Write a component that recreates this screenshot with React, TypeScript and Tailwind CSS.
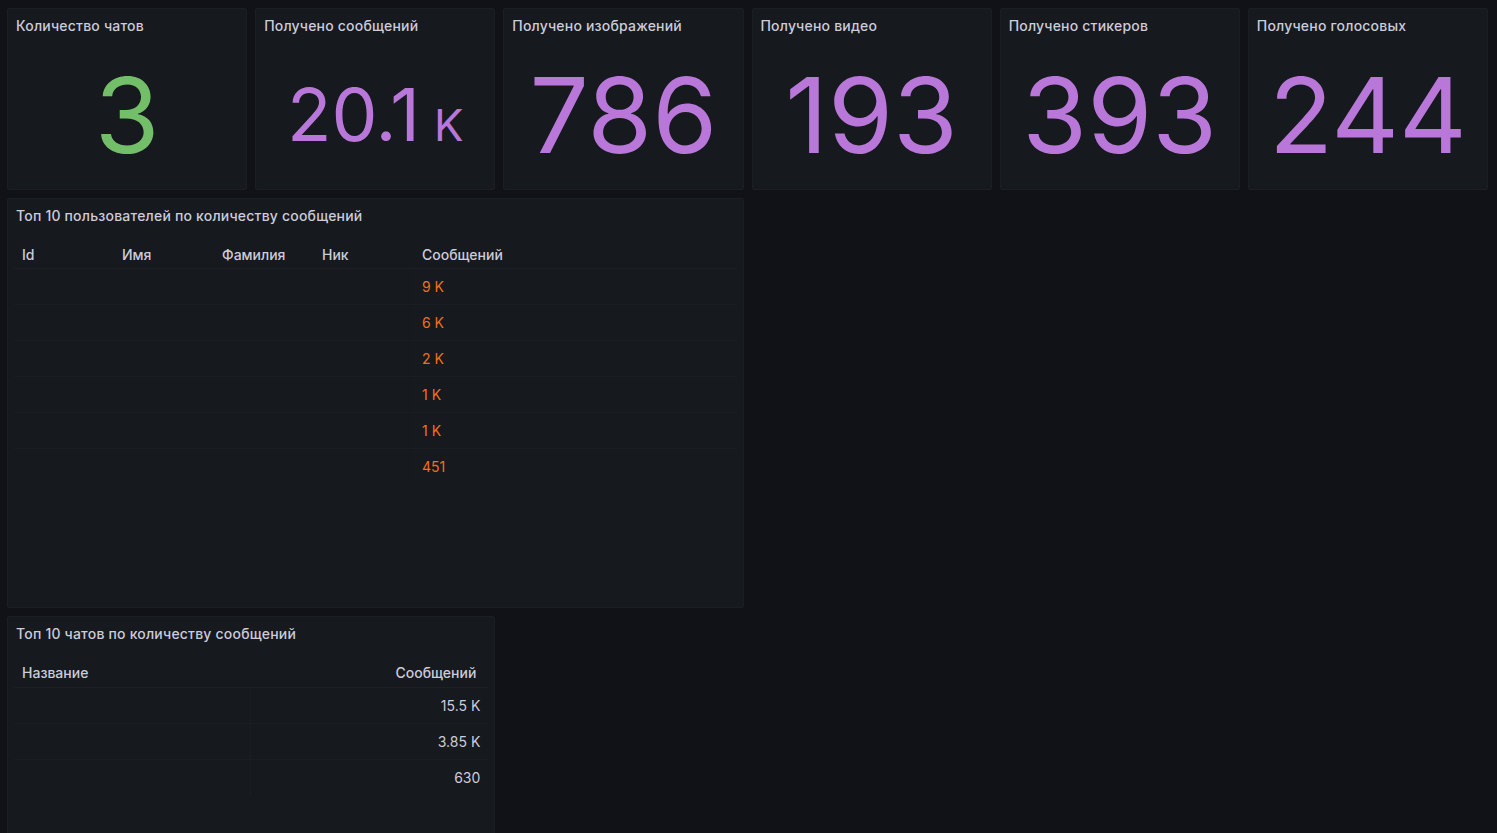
import React from "react";

const font = { fontFamily: "Inter, 'Noto Sans', sans-serif" };

function Panel({ title, className = "", children }: { title: string; className?: string; children?: React.ReactNode }) {
  return (
    <div className={`flex flex-col rounded-[2px] border border-[#1b1e22] bg-[#16191d] ${className}`}>
      <div className="flex h-[32px] shrink-0 items-center pl-2 text-[14px] font-medium tracking-[0.2px] text-[#ccccdc]">{title}</div>
      {children}
    </div>
  );
}

function Stat({ title, value, color }: { title: string; value: React.ReactNode; color: string }) {
  return (
    <Panel title={title} className="h-[182px]">
      <div className="flex flex-1 items-center justify-center pb-[2px] text-[105px] leading-none" style={{ color }}>
        {value}
      </div>
    </Panel>
  );
}

const users = ["9 K", "6 K", "2 K", "1 K", "1 K", "451"];
const chats = ["15.5 K", "3.85 K", "630"];

export default function App() {
  return (
    <div className="h-[833px] overflow-hidden bg-[#111217] pl-[7px] pr-[9px] pt-[8px]" style={font}>
      <div className="grid grid-cols-6 gap-2">
        <Stat title="Количество чатов" value="3" color="#73bf69" />
        <Stat
          title="Получено сообщений"
          color="#b877d9"
          value={
            <span className="flex items-baseline">
              <span className="text-[73px]">20.1</span>
              <span className="ml-[14px] text-[44px]">K</span>
            </span>
          }
        />
        <Stat title="Получено изображений" value="786" color="#b877d9" />
        <Stat title="Получено видео" value="193" color="#b877d9" />
        <Stat title="Получено стикеров" value="393" color="#b877d9" />
        <Stat title="Получено голосовых" value="244" color="#b877d9" />

        <Panel title="Топ 10 пользователей по количеству сообщений" className="col-span-3 h-[410px]">
          <div className="px-[6px] pt-[10px] text-[14px]">
            <div className="flex h-[28px] items-center border-b border-[#1c1f23] font-medium text-[#ccccdc]">
              <div className="w-[100px] pl-2">Id</div>
              <div className="w-[100px] pl-2">Имя</div>
              <div className="w-[100px] pl-2">Фамилия</div>
              <div className="w-[100px] pl-2">Ник</div>
              <div className="flex-1 pl-2">Сообщений</div>
            </div>
            {users.map((v, i) => (
              <div
                key={i}
                className={`flex h-[36px] items-center ${i < users.length - 1 ? "border-b border-[#1a1d21]" : ""}`}
              >
                <div className="w-[400px]" />
                <div className="flex h-full flex-1 items-center border-l border-[#181b1f] pb-px pl-[7px] text-[#f0701a]">{v}</div>
              </div>
            ))}
          </div>
        </Panel>
        <div className="col-span-3" />

        <Panel title="Топ 10 чатов по количеству сообщений" className="col-span-2 h-[240px]">
          <div className="px-[6px] pt-[9px] text-[14px]">
            <div className="flex h-[30px] items-center border-b border-[#1c1f23] font-medium text-[#ccccdc]">
              <div className="w-[236px] pl-2">Название</div>
              <div className="flex-1 pr-[12px] text-right">Сообщений</div>
            </div>
            {chats.map((v, i) => (
              <div
                key={i}
                className={`flex h-[36px] items-center ${i < chats.length - 1 ? "border-b border-[#1a1d21]" : ""}`}
              >
                <div className="h-full w-[236px]" />
                <div className="flex h-full flex-1 items-center justify-end border-l border-[#1a1d21] pb-px pr-[8px] text-[#ccccdc]">
                  {v}
                </div>
              </div>
            ))}
          </div>
        </Panel>
      </div>
    </div>
  );
}
